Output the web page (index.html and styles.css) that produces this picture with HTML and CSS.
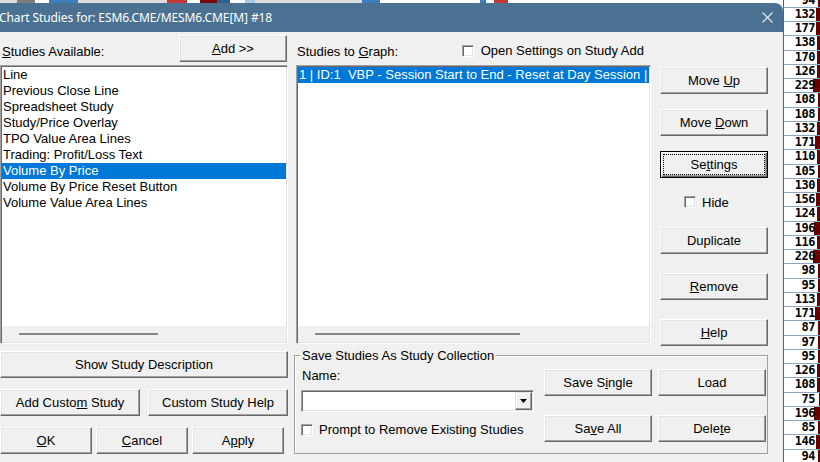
FILE: index.html
```html
<!DOCTYPE html>
<html lang="en">
<head>
    <meta charset="UTF-8">
    <title>Chart Studies</title>
    <link rel="stylesheet" href="styles.css">
</head>
<body>
<div class="screen">
    <div class="window-col">
        <!-- chart behind the dialog, only its top edge shows -->
        <div class="chart-strip">
            <span class="seg s-light" style="width:17px"></span>
            <span class="seg s-grey" style="width:18px"></span>
            <span class="seg s-white" style="width:14px"></span>
            <span class="seg s-blue" style="width:29px"></span>
            <span class="seg s-light" style="width:89px"></span>
            <span class="seg s-red" style="width:20px"></span>
            <span class="seg s-white" style="width:13px"></span>
            <span class="seg s-dred" style="width:17px"></span>
            <span class="seg s-dblue" style="width:13px"></span>
            <span class="seg s-white" style="width:15px"></span>
            <span class="seg s-pale" style="width:10px"></span>
            <span class="seg s-light" style="width:107px"></span>
            <span class="seg s-blue" style="width:18px"></span>
            <span class="seg s-white" style="width:100px"></span>
            <span class="seg s-blue" style="width:6px"></span>
            <span class="seg s-white" style="width:8px"></span>
            <span class="seg s-red" style="width:14px"></span>
            <span class="seg s-white" style="flex:1"></span>
        </div>

        <div class="dialog">
            <div class="titlebar">
                <span class="title">Chart Studies for: ESM6.CME/MESM6.CME[M] #18</span>
                <svg class="close" width="11" height="11" viewBox="0 0 11 11">
                    <path d="M0.5 0.5 L10.5 10.5 M10.5 0.5 L0.5 10.5" stroke="#e6edf3" stroke-width="1.1" fill="none"/>
                </svg>
            </div>

            <div class="dialog-body">
                <div class="col-left">
                    <div class="head-row">
                        <span class="label"><u>S</u>tudies Available:</span>
                        <button class="btn btn-add"><u>A</u>dd &gt;&gt;</button>
                    </div>
                    <div class="listbox">
                        <ul class="items">
                            <li>Line</li>
                            <li>Previous Close Line</li>
                            <li>Spreadsheet Study</li>
                            <li>Study/Price Overlay</li>
                            <li>TPO Value Area Lines</li>
                            <li>Trading: Profit/Loss Text</li>
                            <li class="selected">Volume By Price</li>
                            <li>Volume By Price Reset Button</li>
                            <li>Volume Value Area Lines</li>
                        </ul>
                        <div class="hscroll"><span class="thumb thumb-left"></span></div>
                    </div>
                    <button class="btn btn-full">Show Study Description</button>
                    <div class="btn-row pair">
                        <button class="btn">Add Custo<u>m</u> Study</button>
                        <button class="btn">Custom Study Help</button>
                    </div>
                    <div class="btn-row triple">
                        <button class="btn"><u>O</u>K</button>
                        <button class="btn"><u>C</u>ancel</button>
                        <button class="btn">A<u>p</u>ply</button>
                    </div>
                </div>

                <div class="col-right">
                    <div class="top-area">
                        <div class="col-mid">
                            <div class="head-row">
                                <span class="label">Studies to <u>G</u>raph:</span>
                                <label class="check check-head"><span class="box"></span>Open Settings on Study Add</label>
                            </div>
                            <div class="listbox">
                                <ul class="items">
                                    <li class="selected">1 | ID:1  VBP - Session Start to End - Reset at Day Session |</li>
                                </ul>
                                <div class="hscroll"><span class="thumb thumb-mid"></span></div>
                            </div>
                        </div>

                        <div class="col-buttons">
                            <button class="btn">Move <u>U</u>p</button>
                            <button class="btn">Move <u>D</u>own</button>
                            <button class="btn default">Se<u>t</u>tings</button>
                            <label class="check check-hide"><span class="box"></span>Hide</label>
                            <button class="btn btn-dup">Duplicate</button>
                            <button class="btn"><u>R</u>emove</button>
                            <button class="btn"><u>H</u>elp</button>
                        </div>
                    </div>

                    <div class="group">
                        <span class="legend">Save Studies As Study Collection</span>
                        <div class="group-form">
                            <span class="name-label">Name:</span>
                            <div class="combo">
                                <span class="combo-value"></span>
                                <span class="combo-arrow">
                                    <svg width="7" height="4" viewBox="0 0 7 4"><path d="M0 0 H7 L3.5 4 Z" fill="#000"/></svg>
                                </span>
                            </div>
                            <label class="check check-prompt"><span class="box"></span>Prompt to Remove Existing Studies</label>
                        </div>
                        <div class="group-buttons">
                            <button class="btn">Save S<u>i</u>ngle</button>
                            <button class="btn">Load</button>
                            <button class="btn">Sa<u>v</u>e All</button>
                            <button class="btn">Dele<u>t</u>e</button>
                        </div>
                    </div>
                </div>
            </div>
        </div>
    </div>

    <!-- price ladder volume column -->
    <div class="ladder">
        <div class="ladder-rows" id="ladder"></div>
    </div>
</div>

<script>
    // volume, bar width
    const rows = [
        [94, 2], [132, 4], [177, 4], [138, 3], [170, 3], [126, 3], [229, 7],
        [108, 2], [108, 2], [132, 3], [171, 5], [110, 3], [105, 2], [130, 3],
        [156, 4], [124, 3], [196, 6], [116, 3], [220, 7], [98, 2], [95, 2],
        [113, 3], [171, 5], [87, 2], [97, 2], [95, 2], [126, 3], [108, 3],
        [75, 1], [196, 6], [85, 2], [146, 4], [94, 2]
    ];
    const ladder = document.getElementById('ladder');
    rows.forEach(([vol, bar]) => {
        const row = document.createElement('div');
        row.className = 'lrow';
        row.innerHTML = `<span class="lbar" style="width:${bar}px"></span><span class="lval">${vol}</span>`;
        ladder.appendChild(row);
    });
</script>
</body>
</html>
```

FILE: styles.css
```css
* {
    box-sizing: border-box;
}
body {
    margin: 0;
    width: 820px;
    height: 462px;
    overflow: hidden;
    background: #fff;
    font-family: "Liberation Sans", Arial, sans-serif;
    font-size: 13px;
    color: #000;
}
u {
    text-decoration: underline;
    text-underline-offset: 1px;
}
.screen {
    display: flex;
    height: 462px;
}
.window-col {
    width: 783px;
    flex: none;
    display: flex;
    flex-direction: column;
}

/* chart peeking above the dialog */
.chart-strip {
    height: 3px;
    display: flex;
}
.seg { display: block; height: 3px; }
.s-light { background: #dcdcdc; }
.s-grey { background: #7c7c7c; }
.s-white { background: #fff; }
.s-blue { background: #3d7ebf; }
.s-red { background: #c4383a; }
.s-dred { background: #7a0a0a; }
.s-dblue { background: #2d5f8f; }
.s-pale { background: #a8c8e8; }

.dialog {
    flex: 1;
    display: flex;
    flex-direction: column;
}
.titlebar {
    height: 29px;
    background: #4a7191;
    border-top-right-radius: 8px;
    display: flex;
    align-items: center;
    justify-content: space-between;
    padding: 0 10px 0 0;
    color: #fff;
}
.title {
    font-family: "Noto Sans", sans-serif;
    font-size: 12px;
    letter-spacing: -0.1px;
    margin-left: -1px;
}
.dialog-body {
    flex: 1;
    background: #f0f0f0;
    display: flex;
    gap: 6px;
    padding: 3px 15px 0 0;
}

/* buttons */
.btn {
    font: inherit;
    color: #000;
    height: 27px;
    padding: 0;
    background: #f0f0f0;
    border: 1px solid;
    border-color: #fff #696969 #696969 #fff;
    box-shadow: inset -1px -1px #a0a0a0, inset 1px 1px #e3e3e3;
}
.btn.default {
    border-color: #000;
    box-shadow: inset 1px 1px #fff, inset -1px -1px #696969, inset -2px -2px #a0a0a0;
    outline: 1px dotted #000;
    outline-offset: -4px;
}

/* left column */
.col-left {
    width: 288px;
    display: flex;
    flex-direction: column;
}
.head-row {
    height: 27px;
    display: flex;
    align-items: flex-end;
    justify-content: space-between;
}
.label {
    line-height: 15px;
    padding: 0 0 3px 2px;
}
.btn-add {
    width: 108px;
    margin-right: 1px;
    align-self: stretch;
}
.listbox {
    margin-top: 3px;
    height: 279px;
    background: #fff;
    border: 1px solid;
    border-color: #a0a0a0 #fff #fff #a0a0a0;
    box-shadow: inset 1px 1px #696969, inset -1px -1px #e3e3e3;
    padding: 1px;
    display: flex;
    flex-direction: column;
}
.items {
    list-style: none;
    margin: 0;
    padding: 0;
    flex: 1;
}
.items li {
    height: 16px;
    line-height: 16px;
    padding-left: 1px;
    white-space: pre;
    overflow: hidden;
}
.items li.selected {
    background: #0078d7;
    color: #fff;
}
.hscroll {
    height: 16px;
    background: #f0f0f0;
    padding-top: 7px;
}
.thumb {
    display: block;
    height: 2px;
    background: #878787;
}
.thumb-left {
    margin-left: 17px;
    width: 139px;
}
.thumb-mid {
    margin-left: 17px;
    width: 205px;
}
.btn-full {
    margin-top: 7px;
    width: 288px;
}
.btn-row {
    display: flex;
    margin-top: 11px;
}
.btn-row.pair {
    gap: 8px;
}
.btn-row.pair .btn {
    width: 140px;
}
.btn-row.triple {
    gap: 4px;
}
.btn-row.triple .btn {
    width: 92px;
}

/* right side */
.col-right {
    width: 474px;
    display: flex;
    flex-direction: column;
}
.top-area {
    display: flex;
    gap: 9px;
}
.col-mid {
    width: 355px;
    margin-left: 2px;
}
.col-mid .label {
    padding-left: 1px;
}
.col-mid .head-row {
    padding-right: 7px;
}

/* checkboxes */
.check {
    display: flex;
    align-items: center;
    gap: 6px;
    line-height: 15px;
}
.box {
    width: 12px;
    height: 12px;
    background: #fff;
    border: 1px solid;
    border-color: #a0a0a0 #fff #fff #a0a0a0;
    box-shadow: inset 1px 1px #696969, inset -1px -1px #e3e3e3;
}
.check-head {
    gap: 7px;
    padding-bottom: 4px;
}

.col-buttons {
    width: 108px;
    padding-top: 32px;
    display: flex;
    flex-direction: column;
}
.col-buttons .btn {
    margin-top: 19px;
}
.col-buttons .btn:nth-child(1) { margin-top: 0; }
.col-buttons .btn:nth-child(2),
.col-buttons .btn:nth-child(3) { margin-top: 15px; }
.col-buttons .btn.btn-dup { margin-top: 16px; }
.check-hide {
    margin: 15px 0 0 24px;
    height: 18px;
}

/* save collection group */
.group {
    position: relative;
    margin-top: 9px;
    height: 99px;
    border: 1px solid #a0a0a0;
    box-shadow: inset 1px 1px #fff;
    display: flex;
    gap: 10px;
    padding-left: 6px;
}
.legend {
    position: absolute;
    top: -8px;
    left: 5px;
    padding: 0 2px;
    line-height: 15px;
    background: #f0f0f0;
}
.group-form {
    width: 233px;
    display: flex;
    flex-direction: column;
    padding-top: 12px;
}
.name-label {
    line-height: 15px;
    padding-left: 1px;
}
.combo {
    margin-top: 7px;
    height: 22px;
    background: #fff;
    border: 1px solid;
    border-color: #a0a0a0 #fff #fff #a0a0a0;
    box-shadow: inset 1px 1px #696969, inset -1px -1px #e3e3e3;
    padding: 1px;
    display: flex;
}
.combo-value {
    flex: 1;
}
.combo-arrow {
    width: 17px;
    background: #f0f0f0;
    border: 1px solid;
    border-color: #e3e3e3 #696969 #696969 #e3e3e3;
    box-shadow: inset -1px -1px #a0a0a0, inset 1px 1px #fff;
    display: flex;
    align-items: center;
    justify-content: center;
}
.check-prompt {
    margin-top: 10px;
}
.group-buttons {
    display: grid;
    grid-template-columns: 108px 108px;
    column-gap: 6px;
    row-gap: 19px;
    align-content: start;
    padding-top: 13px;
}

/* ladder column on the right */
.ladder {
    flex: 1;
    background: #fff;
    border-left: 1px solid #3b6a98;
    overflow: hidden;
}
.ladder-rows {
    margin-top: -6.5px;
}
.lrow {
    position: relative;
    height: 14.25px;
    border-bottom: 1px solid #8ea7c1;
    text-align: right;
    padding-right: 5px;
    font: bold 12px/13px "DejaVu Sans Mono", monospace;
    letter-spacing: -0.5px;
}
.lbar {
    position: absolute;
    top: 0;
    right: 0;
    bottom: 0;
    background: #6b0000;
}
.lval {
    position: relative;
}
```
